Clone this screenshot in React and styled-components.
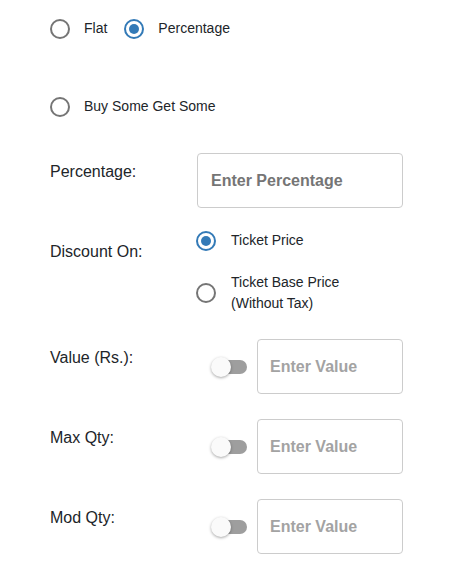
import React, { useState } from 'react'
import styled, { createGlobalStyle } from 'styled-components'

const GlobalStyle = createGlobalStyle`
  body {
    margin: 0;
    background: #ffffff;
    font-family: "Liberation Sans", Arial, sans-serif;
    color: #212529;
  }
`

function Radio({ checked, onClick }) {
  return (
    <RadioCircle $checked={checked} onClick={onClick}>
      {checked && <RadioDot />}
    </RadioCircle>
  )
}

function Toggle() {
  return (
    <ToggleWrap>
      <ToggleTrack />
      <ToggleKnob />
    </ToggleWrap>
  )
}

function App() {
  const [type, setType] = useState('percentage')
  const [on, setOn] = useState('ticket')

  return (
    <Page>
      <GlobalStyle />
      <RadioRow>
        <Option>
          <Radio checked={type === 'flat'} onClick={() => setType('flat')} />
          <OptionText>Flat</OptionText>
        </Option>
        <Option>
          <Radio checked={type === 'percentage'} onClick={() => setType('percentage')} />
          <OptionText>Percentage</OptionText>
        </Option>
      </RadioRow>

      <BuyRow>
        <Option>
          <Radio checked={type === 'bogo'} onClick={() => setType('bogo')} />
          <OptionText>Buy Some Get Some</OptionText>
        </Option>
      </BuyRow>

      <FieldRow $top={36}>
        <Label>Percentage:</Label>
        <Input placeholder="Enter Percentage" $width={206} />
      </FieldRow>

      <FieldRow $top={22}>
        <Label $pad={12}>Discount On:</Label>
        <OptionList>
          <Option $gap={15}>
            <Radio checked={on === 'ticket'} onClick={() => setOn('ticket')} />
            <OptionText>Ticket Price</OptionText>
          </Option>
          <Option $gap={15}>
            <Radio checked={on === 'base'} onClick={() => setOn('base')} />
            <OptionText>Ticket Base Price<br />(Without Tax)</OptionText>
          </Option>
        </OptionList>
      </FieldRow>

      <FieldRow $top={25}>
        <Label>Value (Rs.):</Label>
        <Controls>
          <Toggle />
          <Input placeholder="Enter Value" $width={146} $muted disabled />
        </Controls>
      </FieldRow>

      <FieldRow $top={25}>
        <Label>Max Qty:</Label>
        <Controls>
          <Toggle />
          <Input placeholder="Enter Value" $width={146} $muted disabled />
        </Controls>
      </FieldRow>

      <FieldRow $top={25}>
        <Label>Mod Qty:</Label>
        <Controls>
          <Toggle />
          <Input placeholder="Enter Value" $width={146} $muted disabled />
        </Controls>
      </FieldRow>
    </Page>
  )
}

export default App

const Page = styled.div`
  padding: 18px 0 20px 50px;
`

const RadioRow = styled.div`
  display: flex;
  gap: 17px;
`

const BuyRow = styled.div`
  margin-top: 57px;
`

const Option = styled.div`
  display: flex;
  align-items: center;
  gap: ${p => p.$gap ?? 14}px;
`

const OptionText = styled.span`
  font-size: 14px;
  line-height: 21px;
  color: #212529;
`

const RadioCircle = styled.div`
  width: 20px;
  height: 20px;
  box-sizing: border-box;
  border-radius: 50%;
  border: 2px solid ${p => (p.$checked ? '#337ab7' : '#757575')};
  display: flex;
  align-items: center;
  justify-content: center;
  flex-shrink: 0;
  cursor: pointer;
`

const RadioDot = styled.div`
  width: 10px;
  height: 10px;
  border-radius: 50%;
  background: #337ab7;
`

const FieldRow = styled.div`
  display: grid;
  grid-template-columns: 147px auto;
  margin-top: ${p => p.$top}px;
`

const Label = styled.div`
  font-size: 16px;
  line-height: 20px;
  padding-top: ${p => p.$pad ?? 9}px;
`

const OptionList = styled.div`
  display: flex;
  flex-direction: column;
  gap: 21px;
  margin-left: -1px;
`

const Controls = styled.div`
  display: flex;
  align-items: center;
  padding-left: 14px;
  gap: 10px;
`

const Input = styled.input`
  width: ${p => p.$width}px;
  height: 55px;
  box-sizing: border-box;
  border: 1px solid #cccccc;
  border-radius: 4px;
  background: #ffffff;
  padding: 0 ${p => (p.$muted ? 12 : 13)}px;
  font-family: "Liberation Sans", Arial, sans-serif;
  font-size: 16px;
  font-weight: 700;
  outline: none;

  &::placeholder {
    color: ${p => (p.$muted ? '#a3a3a3' : '#757575')};
    font-weight: 700;
    opacity: 1;
  }
`

const ToggleWrap = styled.div`
  position: relative;
  width: 36px;
  height: 20px;
  flex-shrink: 0;
`

const ToggleTrack = styled.div`
  position: absolute;
  left: 2px;
  right: 0;
  top: 3px;
  height: 14px;
  border-radius: 7px;
  background: #9e9e9e;
`

const ToggleKnob = styled.div`
  position: absolute;
  left: 0;
  top: 0;
  width: 20px;
  height: 20px;
  border-radius: 50%;
  background: #fafafa;
  box-shadow: 0 1px 3px rgba(0, 0, 0, 0.35);
`
